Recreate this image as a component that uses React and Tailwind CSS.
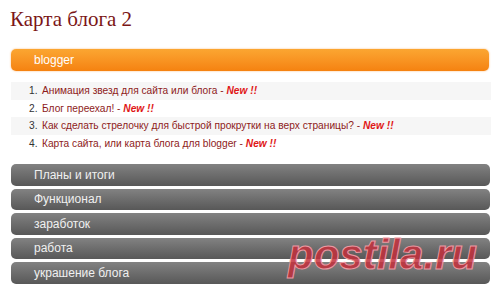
import React from "react";

/* ================= DATA ================= */

const posts = [
  "Анимация звезд для сайта или блога",
  "Блог переехал!",
  "Как сделать стрелочку для быстрой прокрутки на верх страницы?",
  "Карта сайта, или карта блога для blogger",
];

const sections = [
  "Планы и итоги",
  "Функционал",
  "заработок",
  "работа",
  "украшение блога",
];

/* ================= APP ================= */

export default function App() {
  return (
    <div
      className="relative w-[500px] h-[300px] overflow-hidden bg-white"
      style={{ fontFamily: '"Liberation Sans", Arial, sans-serif' }}
    >
      {/* TITLE */}
      <h1
        className="pl-[10px] pt-[6px] h-[49px] text-[21px] leading-[26px] text-[#7b1616]"
        style={{ fontFamily: '"Liberation Serif", "Times New Roman", serif' }}
      >
        Карта блога 2
      </h1>

      {/* ACTIVE SECTION */}
      <div className="mx-[11px] w-[478px] h-[22px] rounded-[5px] bg-gradient-to-b from-[#fba631] to-[#f5820f] flex items-center pl-[23px] text-[12px] text-white shadow-[0_0_2px_rgba(245,130,15,0.6)]">
        blogger
      </div>

      {/* POSTS */}
      <ol className="mt-[11px] ml-[11px] w-[480px] text-[10.2px]">
        {posts.map((title, i) => (
          <li
            key={i}
            className={`h-[17.5px] flex items-center pl-[18px] whitespace-pre ${
              i % 2 === 0 ? "bg-[#f6f6f6]" : ""
            }`}
          >
            <span className="w-[13px] text-[#333]">{i + 1}.</span>
            <span className="text-[#8e1b1b]">{title} - </span>
            <span className="italic font-bold text-[#e01818]">New !!</span>
          </li>
        ))}
      </ol>

      {/* SECTIONS */}
      <div className="mt-[12px] ml-[11px] w-[479px] flex flex-col gap-[3px]">
        {sections.map((s) => (
          <div
            key={s}
            className="h-[21.5px] rounded-[5px] bg-gradient-to-b from-[#828282] to-[#585858] flex items-center pl-[23px] text-[12px] text-[#f0f0f0]"
          >
            {s}
          </div>
        ))}
      </div>

      {/* WATERMARK */}
      <div
        className="absolute left-[288px] top-[234px] text-[42px] leading-none italic font-bold text-[#c3303c]/85"
        style={{ WebkitTextStroke: "1px #eb9aa3" }}
      >
        postila.ru
      </div>
    </div>
  );
}
